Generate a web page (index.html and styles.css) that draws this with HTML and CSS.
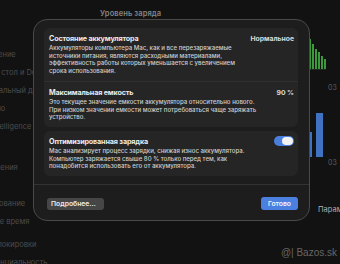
FILE: index.html
```html
<!DOCTYPE html>
<html lang="ru">
<head>
<meta charset="utf-8">
<link rel="stylesheet" href="styles.css">
</head>
<body>
<div class="window">
  <nav class="sidebar">
    <div class="group">
      <div class="item">Оформление</div>
      <div class="item">Рабочий стол и Dock</div>
      <div class="item">Универсальный доступ</div>
      <div class="item">Включено</div>
      <div class="item">Apple Intelligence и Siri</div>
      <div class="item">Звук</div>
    </div>
    <div class="group">
      <div class="item">Уведомления</div>
      <div class="item">Фокус</div>
      <div class="item">Использование</div>
      <div class="item">Экранное время</div>
    </div>
    <div class="group">
      <div class="item">Экран блокировки</div>
      <div class="item">Конфиденциальность</div>
    </div>
  </nav>
  <main class="main">
    <div class="title">Уровень заряда</div>
    <div class="chart chart-level">
      <div class="plot">
        <span class="bar green" style="height:30px"></span>
        <span class="bar green" style="height:30px"></span>
        <span class="bar green" style="height:30px"></span>
        <span class="bar green" style="height:25px"></span>
        <span class="bar green" style="height:20px"></span>
        <span class="bar green" style="height:17px"></span>
        <span class="bar green" style="height:13px"></span>
        <span class="bar green" style="height:10px"></span>
      </div>
      <div class="axis">03</div>
    </div>
    <div class="chart chart-usage">
      <div class="plot">
        <span class="bar blue" style="height:25px"></span>
        <span class="bar blue" style="height:44px"></span>
      </div>
      <div class="axis">03</div>
    </div>
    <div class="params">Параметры…</div>
  </main>
</div>

<div class="dialog">
  <div class="dialog-body">
    <section class="card">
      <div class="row">
        <div class="row-head">
          <h3>Состояние аккумулятора</h3>
          <span class="value">Нормальное</span>
        </div>
        <p>Аккумуляторы компьютера Mac, как и все перезаряжаемые<br>источники питания, являются расходными материалами,<br>эффективность работы которых уменьшается с увеличением<br>срока использования.</p>
      </div>
      <div class="row">
        <div class="row-head">
          <h3>Максимальная емкость</h3>
          <span class="value">90 %</span>
        </div>
        <p>Это текущее значение емкости аккумулятора относительно нового.<br>При низком значении емкости может потребоваться чаще заряжать<br>устройство.</p>
      </div>
    </section>
    <section class="card">
      <div class="row">
        <div class="row-head">
          <h3>Оптимизированная зарядка</h3>
          <span class="toggle"><span class="knob"></span></span>
        </div>
        <p>Mac анализирует процесс зарядки, снижая износ аккумулятора.<br>Компьютер заряжается свыше 80 % только перед тем, как<br>понадобится использовать его от аккумулятора.</p>
      </div>
    </section>
  </div>
  <footer class="dialog-foot">
    <button class="btn btn-gray">Подробнее…</button>
    <button class="btn btn-blue">Готово</button>
  </footer>
</div>

<div class="watermark">@| Bazos.sk</div>
</body>
</html>
```

FILE: styles.css
```css
* { box-sizing: border-box; }
html, body { margin: 0; padding: 0; }
body {
  width: 340px;
  height: 264px;
  overflow: hidden;
  background: #121212;
  font-family: Inter, "Noto Sans", "Liberation Sans", sans-serif;
  position: relative;
}

.window {
  display: flex;
  height: 264px;
}

.sidebar {
  width: 128px;
  margin-left: -32px;
  padding-top: 50px;
  display: flex;
  flex-direction: column;
  gap: 5px;
  flex-shrink: 0;
}
.sidebar .item {
  height: 18px;
  line-height: 10px;
  font-size: 7.5px;
  color: #4c4c4c;
  white-space: nowrap;
}

.main {
  flex: 1;
  display: flex;
  flex-direction: column;
  padding-top: 9px;
  padding-left: 4px;
}
.title {
  font-size: 7.5px;
  line-height: 10px;
  font-weight: 600;
  color: #858585;
  letter-spacing: 0.1px;
}

.chart {
  display: flex;
  flex-direction: column;
}
.chart-level { margin-top: 21px; }
.chart-usage { margin-top: 21px; }

.plot {
  width: 226px;
  height: 30px;
  display: flex;
  align-items: flex-end;
  justify-content: flex-end;
  gap: 1px;
  border-bottom: 1px solid #262626;
}
.chart-usage .plot {
  height: 44px;
  width: 223px;
  gap: 4px;
  border-bottom: none;
}
.bar { display: block; }
.bar.green { width: 2px; background: #3d9a3c; }
.bar.blue { width: 7px; background: #3f72c0; }

.axis {
  margin-left: 228px;
  margin-top: 13px;
  font-size: 7px;
  line-height: 9px;
  color: #5e5e5e;
}
.chart-usage .axis { margin-top: 1px; }

.params {
  margin-left: 218px;
  margin-top: 38px;
  font-size: 7.5px;
  line-height: 10px;
  color: #b0b0b0;
  white-space: nowrap;
}

/* Dialog overlay */
.dialog {
  position: absolute;
  left: 33px;
  top: 19px;
  width: 277px;
  height: 202px;
  background: #1d1d1d;
  border: 1px solid #4a4a4a;
  border-radius: 14px;
  display: flex;
  flex-direction: column;
  overflow: hidden;
}
.dialog-body {
  padding: 8px 11px 0 10px;
  display: flex;
  flex-direction: column;
  gap: 4px;
}
.card {
  background: #252525;
  border-radius: 6px;
  display: flex;
  flex-direction: column;
}
.row {
  padding: 6px 4px 6px 5px;
}
.row + .row {
  border-top: 1px solid #303030;
}
.row-head {
  display: flex;
  justify-content: space-between;
  align-items: center;
  height: 9px;
}
h3 {
  margin: 0;
  font-size: 7.2px;
  font-weight: 700;
  line-height: 9px;
  color: #ececec;
  white-space: nowrap;
  letter-spacing: -0.15px;
}
.value {
  font-size: 6.8px;
  font-weight: 700;
  color: #dcdcdc;
  line-height: 9px;
}
p {
  margin: 1px 0 0;
  font-size: 6.05px;
  line-height: 7.7px;
  color: #cfcfcf;
  font-weight: 500;
  white-space: nowrap;
}

.toggle {
  width: 20px;
  height: 10px;
  border-radius: 5px;
  background: #4a7fdd;
  display: flex;
  align-items: center;
  justify-content: flex-end;
  padding: 0 1px;
}
.knob {
  width: 11px;
  height: 8px;
  border-radius: 4px;
  background: #f2f2f2;
}

.dialog-foot {
  margin-top: auto;
  border-top: 1px solid #333;
  height: 36px;
  display: flex;
  align-items: center;
  justify-content: space-between;
  padding: 2px 11px 0 13px;
}
.btn {
  font-family: inherit;
  border: none;
  border-radius: 3px;
  font-size: 6.8px;
  font-weight: 600;
  line-height: 9px;
  color: #ececec;
}
.btn-gray { background: #464646; width: 57px; height: 12px; padding: 0 4px; text-align: left; }
.btn-blue { background: #4b7fe0; width: 37px; height: 13px; padding: 0; color: #f0f4ff; }

.watermark {
  position: absolute;
  right: 3px;
  bottom: 5px;
  font-size: 10px;
  line-height: 12px;
  color: #666;
  font-family: "Liberation Sans", sans-serif;
}
```
